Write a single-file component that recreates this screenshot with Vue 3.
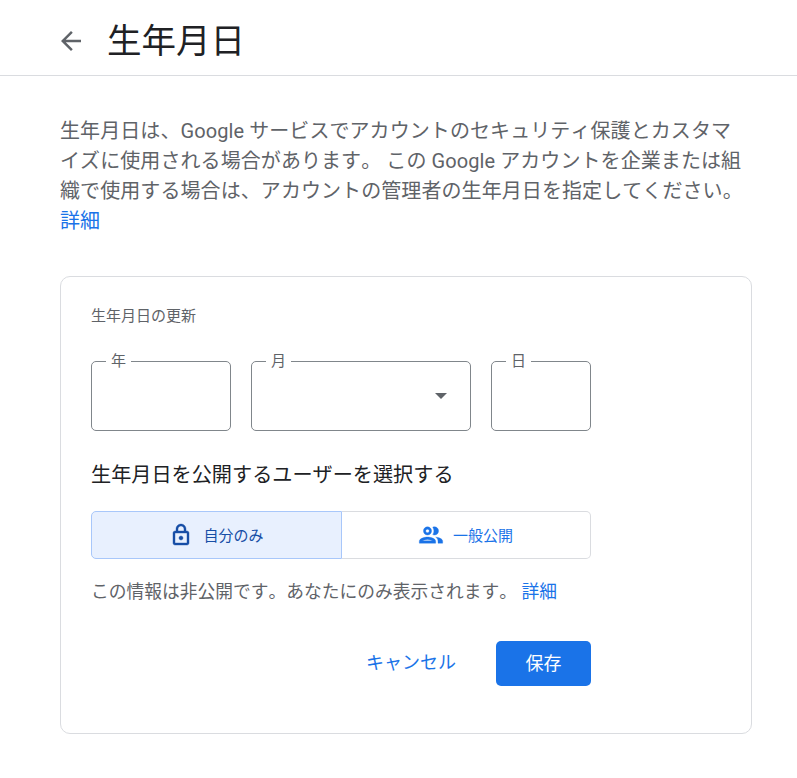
<script setup>
const fields = [
  { label: '年', cls: 'year' },
  { label: '月', cls: 'month', select: true },
  { label: '日', cls: 'day' }
]
</script>

<template>
  <div class="page">
    <header class="top">
      <svg class="back" viewBox="0 0 24 24" width="30" height="30">
        <path d="M20 11H7.83l5.59-5.59L12 4l-8 8 8 8 1.41-1.41L7.83 13H20v-2z" fill="#5f6368" />
      </svg>
      <h1>生年月日</h1>
    </header>

    <main class="content">
      <p class="intro">生年月日は、Google サービスでアカウントのセキュリティ保護とカスタマイズに使用される場合があります。 この Google アカウントを企業または組織で使用する場合は、アカウントの管理者の生年月日を指定してください。</p>
      <a class="link more">詳細</a>

      <section class="card">
        <h2>生年月日の更新</h2>

        <div class="fields">
          <fieldset v-for="f in fields" :key="f.label" :class="['field', f.cls]">
            <legend>{{ f.label }}</legend>
            <span v-if="f.select" class="caret"></span>
          </fieldset>
        </div>

        <h3>生年月日を公開するユーザーを選択する</h3>

        <div class="toggle">
          <button class="opt active">
            <svg viewBox="0 0 24 24" width="24" height="24">
              <path fill="#174ea6" stroke="#174ea6" stroke-width="0.4" d="M18 8h-1V6c0-2.76-2.24-5-5-5S7 3.24 7 6v2H6c-1.1 0-2 .9-2 2v10c0 1.1.9 2 2 2h12c1.1 0 2-.9 2-2V10c0-1.1-.9-2-2-2zM9 6c0-1.66 1.34-3 3-3s3 1.34 3 3v2H9V6zm9 14H6V10h12v10zm-6-3c1.1 0 2-.9 2-2s-.9-2-2-2-2 .9-2 2 .9 2 2 2z" />
            </svg>
            <span>自分のみ</span>
          </button>
          <button class="opt public">
            <svg viewBox="0 0 24 24" width="28" height="28">
              <path fill="#1a73e8" stroke="#1a73e8" stroke-width="0.3" d="M9 13.75c-2.34 0-7 1.17-7 3.5V19h14v-1.75c0-2.33-4.66-3.5-7-3.5zM4.34 17c.84-.58 2.87-1.25 4.66-1.25s3.82.67 4.66 1.25H4.34zM9 12c1.93 0 3.5-1.57 3.5-3.5S10.93 5 9 5 5.5 6.57 5.5 8.5 7.07 12 9 12zm0-5c.83 0 1.5.67 1.5 1.5S9.83 10 9 10s-1.5-.67-1.5-1.5S8.17 7 9 7zm7.04 6.81c1.16.84 1.96 1.96 1.96 3.44V19h4v-1.75c0-2.02-3.5-3.17-5.96-3.44zM15 12c1.93 0 3.5-1.57 3.5-3.5S16.93 5 15 5c-.54 0-1.04.13-1.5.35.63.89 1 1.98 1 3.15s-.37 2.26-1 3.15c.46.22.96.35 1.5.35z" />
            </svg>
            <span>一般公開</span>
          </button>
        </div>

        <p class="note">この情報は非公開です。あなたにのみ表示されます。 <a class="link">詳細</a></p>

        <div class="actions">
          <button class="cancel">キャンセル</button>
          <button class="save">保存</button>
        </div>
      </section>
    </main>
  </div>
</template>

<style>
html, body {
  background: #fff;
}
</style>

<style scoped>
.page {
  width: 797px;
  height: 778px;
  overflow: hidden;
  font-family: Roboto, "Noto Sans CJK JP", sans-serif;
  font-kerning: none;
  color: #5f6368;
}

.top {
  border-bottom: 1px solid #dadce0;
  display: flex;
  align-items: center;
  padding: 7px 0 0 56px;
  height: 68px;
}

.back {
  margin-right: 21px;
}

h1 {
  margin: 0;
  font-size: 34.5px;
  font-weight: 400;
  color: #202124;
  line-height: 1;
}

.content {
  padding: 40px 45px 0 60px;
}

.intro {
  margin: 0;
  max-width: 686px;
  font-size: 20px;
  letter-spacing: 0.08px;
  line-height: 30px;
}

.more {
  display: block;
  font-size: 20px;
  line-height: 30px;
}

.link {
  color: #1a73e8;
}

.card {
  margin-top: 40px;
  height: 458px;
  box-sizing: border-box;
  border: 1px solid #dadce0;
  border-radius: 10px;
  padding: 30px 30px 0;
}

h2 {
  margin: 0;
  font-size: 15px;
  line-height: 18px;
  font-weight: 400;
}

.fields {
  display: flex;
  gap: 20px;
  margin-top: 27px;
}

.field {
  position: relative;
  margin: 0;
  padding: 0;
  height: 79px;
  box-sizing: border-box;
  border: 1px solid #80868b;
  border-radius: 5px;
}

.year { width: 140px; }
.month { width: 220px; }
.day { width: 100px; }

legend {
  margin-left: 14px;
  padding: 0 5px;
  font-size: 15px;
  line-height: 18px;
  color: #5f6368;
}

.caret {
  position: absolute;
  right: 23px;
  top: 23px;
  border-left: 6px solid transparent;
  border-right: 6px solid transparent;
  border-top: 6px solid #5f6368;
}

h3 {
  margin: 31px 0 0;
  font-size: 20.15px;
  line-height: 26px;
  font-weight: 400;
  color: #202124;
}

.toggle {
  display: flex;
  width: 500px;
  height: 48px;
  margin-top: 23px;
}

.opt {
  flex: 1;
  display: flex;
  align-items: center;
  justify-content: center;
  gap: 10px;
  font: inherit;
  font-size: 15px;
  color: #1a73e8;
  background: #fff;
  border: 1px solid #dadce0;
  border-left: none;
  border-radius: 0 5px 5px 0;
  padding: 0 0 1px;
}

.opt.public {
  gap: 8px;
  padding-right: 2px;
}

.opt.active {
  flex: 0 0 251px;
  background: #e8f0fe;
  color: #174ea6;
  border: 1px solid #a8c7fa;
  border-radius: 5px 0 0 5px;
}

.note {
  margin: 21px 0 0;
  font-size: 17.75px;
  line-height: 24px;
}

.actions {
  width: 500px;
  display: flex;
  justify-content: flex-end;
  align-items: center;
  gap: 40px;
  margin-top: 37px;
}

.cancel {
  background: none;
  border: none;
  padding: 0 0 6px;
  font: inherit;
  font-size: 18px;
  color: #1a73e8;
}

.save {
  width: 95px;
  height: 45px;
  background: #1a73e8;
  border: none;
  border-radius: 5px;
  padding: 0 0 4px;
  font: inherit;
  font-size: 18px;
  color: #fff;
}
</style>
